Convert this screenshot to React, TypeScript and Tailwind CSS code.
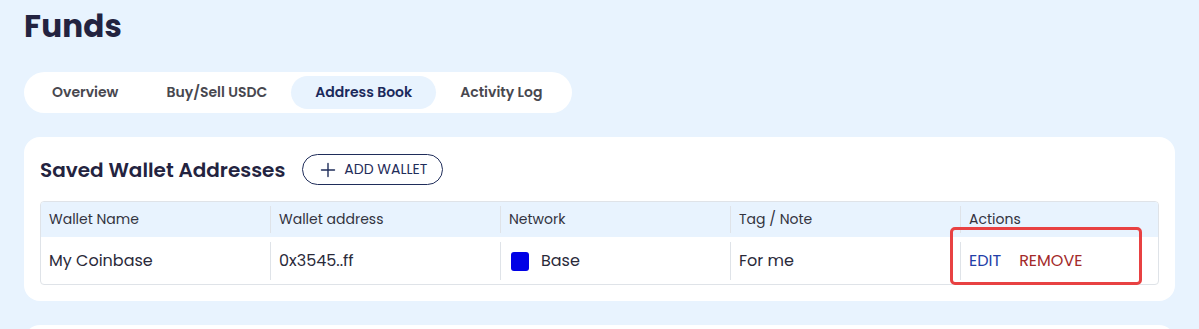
const tabs = ["Overview", "Buy/Sell USDC", "Address Book", "Activity Log"];
const columns = ["Wallet Name", "Wallet address", "Network", "Tag / Note", "Actions"];

function PlusIcon() {
  return (
    <svg width="16" height="16" viewBox="0 0 16 16" fill="none" stroke="currentColor" strokeWidth="1.4" strokeLinecap="round">
      <path d="M8 1.5v13M1.5 8h13" />
    </svg>
  );
}

function Cell({ children, last }: { children: React.ReactNode; last?: boolean }) {
  return (
    <div className={`relative flex items-center px-2 ${last ? "" : "after:absolute after:right-0 after:top-1 after:bottom-1 after:w-px after:bg-[#dfe3e8]"}`}>
      {children}
    </div>
  );
}

export default function App() {
  return (
    <div className="relative h-[329px] overflow-hidden bg-[#e8f3fe] px-6 pt-[6px] font-['Poppins','Inter',sans-serif] text-[#232340]">
      <h1 className="text-[31px] font-bold leading-[40px] tracking-[0.2px]">Funds</h1>

      <nav className="mt-[26px] flex h-[41px] w-[548px] items-center rounded-full bg-white px-1 text-[14px] font-semibold text-[#48484f]">
        {tabs.map((tab) => (
          <span
            key={tab}
            className={`flex h-[33px] items-center rounded-full px-6 ${tab === "Address Book" ? "bg-[#e8f3fe] text-[#1b2a5c]" : ""}`}
          >
            {tab}
          </span>
        ))}
      </nav>

      <section className="mt-6 rounded-2xl bg-white px-4 pb-4 pt-[17px]">
        <div className="flex items-center gap-4">
          <h2 className="text-[20px] font-semibold leading-[30px]">Saved Wallet Addresses</h2>
          <button className="ml-px flex h-[31px] items-center gap-2 rounded-full border border-[#1f2d5a] pl-[17px] pr-[15px] text-[14px] text-[#1f2d5a]">
            <PlusIcon />
            ADD WALLET
          </button>
        </div>

        <div className="relative mt-4 overflow-hidden rounded border border-[#dfe3e8]">
          <div className="grid h-[35px] grid-cols-[230px_230px_230px_230px_1fr] bg-[#e8f3fe] text-[14px] text-[#33333f]">
            {columns.map((c, i) => (
              <Cell key={c} last={i === columns.length - 1}>
                {c}
              </Cell>
            ))}
          </div>
          <div className="grid h-[47px] grid-cols-[230px_230px_230px_230px_1fr] pt-px text-[16px] text-[#2a2a3a]">
            <Cell>My Coinbase</Cell>
            <Cell>0x3545..ff</Cell>
            <Cell>
              <span className="ml-[2px] mr-3 h-[19px] w-[18px] rounded-[3px] bg-[#0000e6]" />
              Base
            </Cell>
            <Cell>For me</Cell>
            <Cell last>
              <span className="text-[#2340a8]">EDIT</span>
              <span className="ml-[18px] text-[#a32a2a]">REMOVE</span>
            </Cell>
          </div>
        </div>
      </section>

      <div className="pointer-events-none absolute left-[950px] top-[227px] h-[58px] w-[192px] rounded-[5px] border-[3px] border-[#e84142]" />

      <section className="mt-6 h-10 rounded-2xl bg-white" />
    </div>
  );
}
